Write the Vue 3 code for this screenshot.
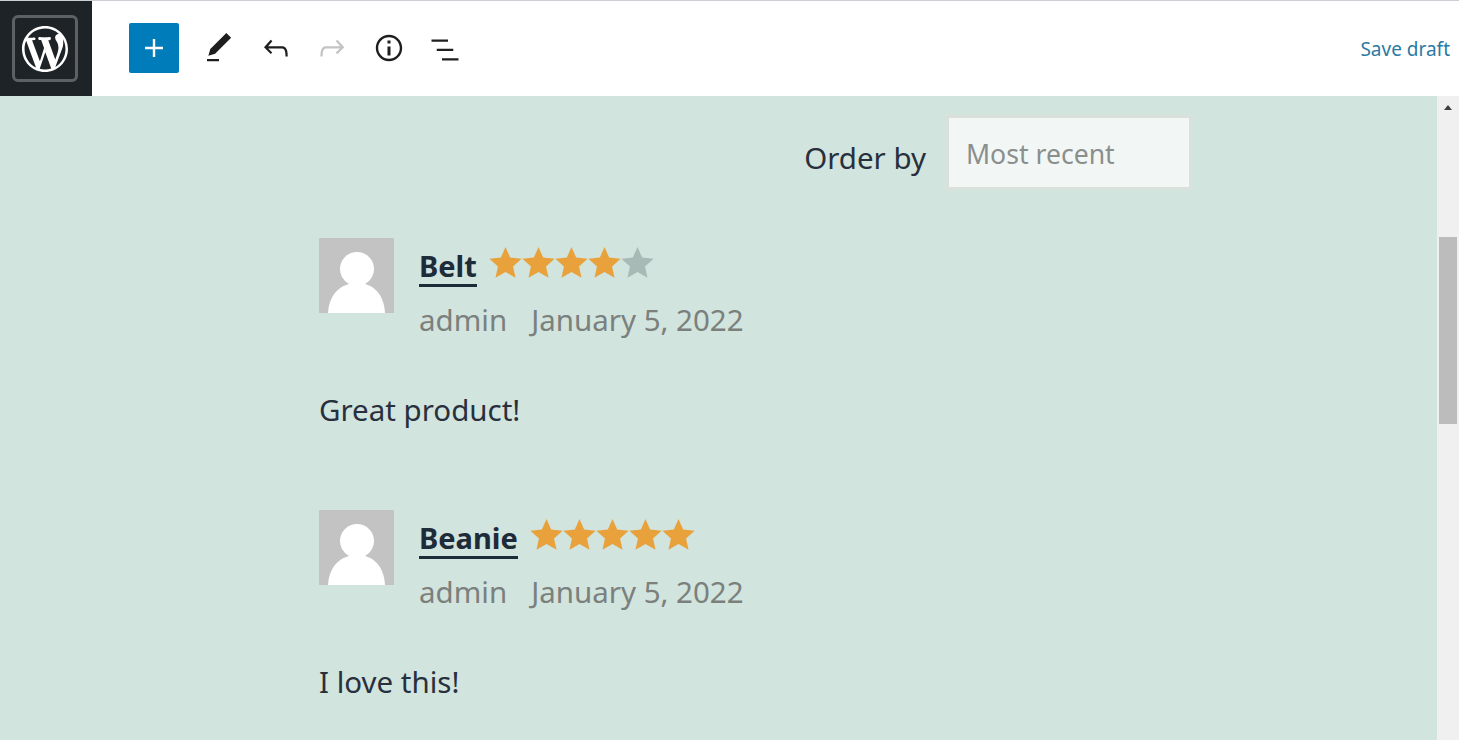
<script setup>
const reviews = [
  { title: 'Belt', rating: 4, author: 'admin', date: 'January 5, 2022', text: 'Great product!' },
  { title: 'Beanie', rating: 5, author: 'admin', date: 'January 5, 2022', text: 'I love this!' },
]
const stars = [1, 2, 3, 4, 5]
</script>

<template>
  <div class="app">
    <header class="topbar">
      <div class="logo-cell">
        <div class="logo-box">
          <svg class="logo" viewBox="0 0 20 20" fill="#fff"><path d="M20 10c0-5.51-4.49-10-10-10C4.48 0 0 4.49 0 10c0 5.52 4.48 10 10 10 5.51 0 10-4.48 10-10zM7.78 15.37L4.37 6.22c.55-.02 1.17-.08 1.17-.08.5-.06.44-1.13-.06-1.11 0 0-1.45.11-2.37.11-.18 0-.37 0-.58-.01C4.12 2.69 6.87 1.11 10 1.11c2.33 0 4.45.87 6.05 2.34-.68-.11-1.65.39-1.65 1.58 0 .74.45 1.36.9 2.1.35.61.55 1.36.55 2.46 0 1.49-1.4 5-1.4 5l-3.03-8.37c.54-.02.82-.17.82-.17.5-.05.44-1.25-.06-1.22 0 0-1.44.12-2.38.12-.87 0-2.33-.12-2.33-.12-.5-.03-.56 1.2-.06 1.22l.92.08 1.26 3.41zM17.41 10c.24-.64.74-1.87.43-4.25.7 1.29 1.05 2.71 1.05 4.25 0 3.29-1.73 6.24-4.4 7.78.97-2.59 1.94-5.2 2.92-7.78zM6.1 18.09C3.12 16.65 1.11 13.53 1.11 10c0-1.3.23-2.48.72-3.59C3.25 10.3 4.67 14.2 6.1 18.09zm4.03-6.63l2.58 6.98c-.86.29-1.76.45-2.71.45-.79 0-1.57-.11-2.29-.33.81-2.38 1.62-4.74 2.42-7.1z"/></svg>
        </div>
      </div>
      <div class="tools">
        <button class="add" type="button">
          <svg class="icon" viewBox="0 0 24 24" fill="#fff"><path d="M18 11.2h-5.2V6h-1.6v5.2H6v1.6h5.2V18h1.6v-5.2H18z"/></svg>
        </button>
        <span class="tool">
          <svg class="icon" viewBox="0 0 24 24"><path d="M20.1 5.1L16.9 2 6.2 12.7l-1.3 4.4 4.5-1.3L20.1 5.1zM4 20.8h8v-1.5H4v1.5z"/></svg>
        </span>
        <span class="tool">
          <svg class="icon" viewBox="0 0 24 24"><path d="M18.3 11.7c-.6-.6-1.4-.9-2.3-.9H6.7l2.9-3.3-1.1-1-4.5 5L8.5 16l1-1-2.7-2.7H16c.5 0 .9.2 1.3.5 1 1 1 3.4 1 4.5v.3h1.5v-.2c0-1.5 0-4.3-1.5-5.7z"/></svg>
        </span>
        <span class="tool disabled">
          <svg class="icon" viewBox="0 0 24 24"><path d="M15.6 6.5l-1.1 1 2.9 3.3H8c-.9 0-1.7.3-2.3.9-1.4 1.5-1.4 4.2-1.4 5.7v.2h1.5v-.3c0-1.1 0-3.5 1-4.5.3-.3.7-.5 1.3-.5h9.2L14.5 15l1.1 1.1 4.6-4.6-4.6-5z"/></svg>
        </span>
        <span class="tool">
          <svg class="icon" viewBox="0 0 24 24"><path d="M12 3.2c-4.8 0-8.8 3.9-8.8 8.8 0 4.8 3.9 8.8 8.8 8.8 4.8 0 8.8-3.9 8.8-8.8 0-4.8-4-8.8-8.8-8.8zm0 16c-4 0-7.2-3.3-7.2-7.2C4.8 8 8 4.8 12 4.8s7.2 3.3 7.2 7.2c0 4-3.2 7.2-7.2 7.2zM11 17h2v-6h-2v6zm0-8h2V7h-2v2z"/></svg>
        </span>
        <span class="tool">
          <svg class="icon" viewBox="0 0 24 24"><path d="M3 6.3h11v1.5H3zM6.5 12.5h11V14h-11zM10 18.8h11v1.5H10z"/></svg>
        </span>
      </div>
      <a class="save">Save draft</a>
    </header>

    <div class="body">
      <main class="content">
        <div class="order">
          <span class="order-label">Order by</span>
          <div class="select">Most recent</div>
        </div>

        <article v-for="r in reviews" :key="r.title" class="review">
          <div class="review-head">
            <svg class="avatar" viewBox="0 0 75 75">
              <rect width="75" height="75" fill="#c3c3c3"/>
              <circle cx="38" cy="31" r="17" fill="#fff"/>
              <path d="M9 75c1-18 12-30 29-30s27 12 28 30z" fill="#fff"/>
            </svg>
            <div class="review-info">
              <div class="title-row">
                <span class="title">{{ r.title }}</span>
                <span class="stars">
                  <svg v-for="s in stars" :key="s" class="star" :class="{ empty: s > r.rating }" viewBox="0 0 24 24"><path d="M12 .8l3.4 7.6 8.3.9-6.2 5.6 1.8 8.2L12 18.9l-7.3 4.2 1.8-8.2L.3 9.3l8.3-.9z"/></svg>
                </span>
              </div>
              <div class="meta"><span>{{ r.author }}</span><span>{{ r.date }}</span></div>
            </div>
          </div>
          <p class="text">{{ r.text }}</p>
        </article>
      </main>
      <aside class="scrollbar">
        <div class="arrow"></div>
        <div class="thumb"></div>
      </aside>
    </div>
  </div>
</template>

<style>
html, body { margin: 0; overflow: hidden; }
</style>

<style scoped>
.app {
  width: 1459px;
  height: 740px;
  display: flex;
  flex-direction: column;
  overflow: hidden;
  font-family: "Noto Sans", "Open Sans", sans-serif;
}
.topbar {
  height: 96px;
  flex: none;
  box-sizing: border-box;
  border-top: 1px solid #ccd0d4;
  background: #fff;
  display: flex;
  align-items: stretch;
}
.logo-cell {
  width: 92px;
  background: #1e2327;
  display: flex;
  align-items: center;
  justify-content: flex-start;
  padding-left: 12px;
  box-sizing: border-box;
}
.logo-box {
  width: 66px;
  height: 67px;
  box-sizing: border-box;
  border: 3px solid #5d6165;
  border-radius: 6px;
  display: flex;
  align-items: center;
  justify-content: center;
}
.logo { width: 46px; height: 46px; }
.tools {
  display: flex;
  align-items: center;
  margin-left: 37px;
  padding-bottom: 2px;
  flex: 1;
}
.add {
  width: 50px;
  height: 50px;
  padding: 0;
  border: 0;
  border-radius: 2px;
  background: #007cba;
  display: flex;
  align-items: center;
  justify-content: center;
  margin-right: 12px;
}
.tool {
  width: 56.5px;
  height: 50px;
  display: flex;
  align-items: center;
  justify-content: center;
  fill: #1e1e1e;
}
.tool.disabled { fill: #c4c4c4; }
.icon { width: 36px; height: 36px; display: block; }
.save {
  align-self: center;
  margin-right: 9px;
  font-size: 19px;
  color: #2b7aa3;
}
.body {
  flex: 1;
  display: flex;
  min-height: 0;
}
.content {
  flex: 1;
  background: #d2e4de;
  overflow: hidden;
}
.order {
  display: flex;
  justify-content: flex-end;
  align-items: center;
  gap: 20px;
  padding: 19px 245px 0 0;
}
.order-label {
  font-size: 29.5px;
  color: #28303d;
  margin-top: 9px;
}
.select {
  width: 246px;
  height: 75px;
  box-sizing: border-box;
  border: 3px solid #dae0dc;
  background: #f2f7f5;
  padding: 2px 0 0 17px;
  display: flex;
  align-items: center;
  font-size: 26.6px;
  color: #8a8f8d;
}
.review {
  margin: 48px 0 0 319px;
  height: 272px;
  margin-bottom: -48px;
  color: #28303d;
}
.review-head {
  display: flex;
  align-items: flex-start;
  gap: 25px;
}
.avatar { width: 75px; height: 75px; display: block; flex: none; }
.review-info { padding-top: 8px; }
.title-row {
  display: flex;
  align-items: flex-start;
  gap: 12px;
}
.title {
  font-size: 29px;
  font-weight: 700;
  line-height: 36px;
  padding-top: 2px;
  color: #1e2b38;
  border-bottom: 3px solid #1e2b38;
}
.stars { display: flex; }
.star { width: 33px; height: 33px; display: block; fill: #e9a23b; }
.star.empty { fill: #a7bab6; }
.meta {
  display: flex;
  gap: 24px;
  font-size: 29.5px;
  color: #7b807d;
  margin-top: 14px;
  line-height: 38px;
}
.text {
  margin: 52px 0 0;
  font-size: 29.5px;
  line-height: 38px;
}
.scrollbar {
  width: 22px;
  flex: none;
  background: #f0f0f0;
  display: flex;
  flex-direction: column;
  align-items: center;
}
.arrow {
  margin-top: 9px;
  width: 0;
  height: 0;
  border-left: 4px solid transparent;
  border-right: 4px solid transparent;
  border-bottom: 5px solid #404040;
}
.thumb {
  margin-top: 127px;
  width: 18px;
  height: 187px;
  background: #bcbcbc;
}
</style>
